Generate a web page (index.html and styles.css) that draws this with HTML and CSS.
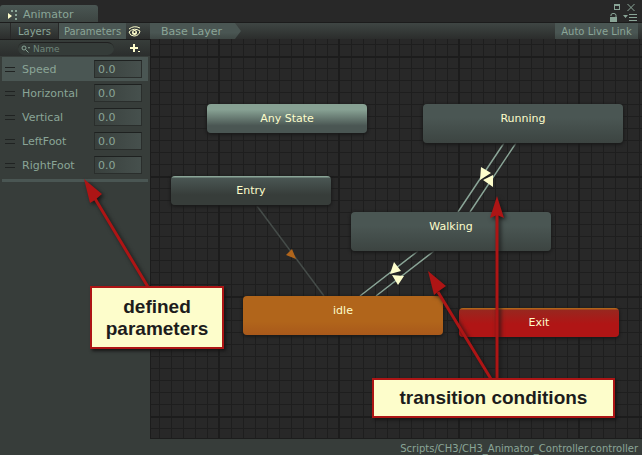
FILE: index.html
```html
<!DOCTYPE html>
<html lang="en">
<head>
<meta charset="utf-8">
<title>Animator</title>
<link rel="stylesheet" href="styles.css">
</head>
<body>
<div class="window">
  <header class="titlebar">
    <div class="tab">
      <svg class="tab-icon" width="10" height="10" viewBox="0 0 10 10" aria-hidden="true">
        <path class="bright" d="M0 3v6l4-3z"/>
        <path class="dim" d="M3 0h2v2H3zM7 0h2v2H7zM7 4h2v2H7zM7 8h2v2H7z"/>
      </svg>
      <h1>Animator</h1>
    </div>
    <div class="controls">
      <div class="control-row">
        <button type="button" aria-label="Maximize"><svg width="6" height="6" viewBox="0 0 6 6"><path class="fill" fill-rule="evenodd" d="M0 0h6v6H0zM1 2v3h4V2z"/></svg></button>
        <button type="button" aria-label="Close"><svg width="8" height="7" viewBox="0 0 8 7"><path class="line" d="M.5 0l7 7M7.500 0l-7 7"/></svg></button>
      </div>
      <div class="control-row">
        <button type="button" aria-label="Lock"><svg width="9" height="9" viewBox="0 0 9 9"><path class="line" d="M2 3V2q0-1.500 2-1.500h1q2 0 2 2V4"/><path class="fill" d="M1 4h7v5H1z"/></svg></button>
        <button type="button" aria-label="Window menu"><svg width="14" height="7" viewBox="0 0 14 7"><path class="fill" d="M0 1h5L2.500 4zM6 0h8v1H6zM6 3h8v1H6zM6 6h8v1H6z"/></svg></button>
      </div>
    </div>
  </header>

  <div class="body">
    <aside class="sidebar">
      <div class="toolbar">
        <button type="button" class="side-tab">Layers</button>
        <button type="button" class="side-tab active">Parameters</button>
        <button type="button" class="eye" aria-label="Toggle panel">
          <svg width="13" height="11" viewBox="0 0 13 11"><path class="eye-line" d="M1 3q5-4 11-1M1 6q5-5 11-1q-1 5-6 5Q2 10 1 6z"/><circle class="bright" cx="6.500" cy="6.500" r="2.500"/><circle class="pupil" cx="6.500" cy="6" r="1"/></svg>
        </button>
      </div>
      <div class="search-row">
        <label class="search">
          <svg width="9" height="8" viewBox="0 0 9 8"><circle class="line" cx="3" cy="3" r="2"/><path class="line" d="M4.500 4.500l3 3"/><path class="fill" d="M7 2h2L8 4z"/></svg>
          <input type="search" placeholder="Name" aria-label="Search by name">
        </label>
        <button type="button" aria-label="Add parameter"><svg width="10" height="9" viewBox="0 0 10 9"><path class="bright" d="M3 0h2v3h3v2H5v3H3V5H0V3h3zM8 7h2v1H8z"/></svg></button>
      </div>
      <ul class="params">
        <li class="selected"><i class="grip"></i><label for="p1">Speed</label><input id="p1" value="0.0"></li>
        <li><i class="grip"></i><label for="p2">Horizontal</label><input id="p2" value="0.0"></li>
        <li><i class="grip"></i><label for="p3">Vertical</label><input id="p3" value="0.0"></li>
        <li><i class="grip"></i><label for="p4">LeftFoot</label><input id="p4" value="0.0"></li>
        <li><i class="grip"></i><label for="p5">RightFoot</label><input id="p5" value="0.0"></li>
      </ul>
    </aside>

    <main class="graph">
      <div class="toolbar">
        <button type="button" class="crumb">Base Layer</button>
        <button type="button" class="live">Auto Live Link</button>
      </div>
      <div class="canvas">
        <svg class="links" width="490" height="398" viewBox="0 0 490 398" aria-hidden="true">
          <path class="entry-link" d="M106 167L173 257"/>
          <path class="entry-arrow" d="M141 210l-6 6 10 4z"/>
          <path class="link" d="M353 104L307 173M365 104L319 173M267 212L209 257M283 212L225 257"/>
          <path class="arrow" d="M330 128l10 6-11 7zM342 136v12l-10-7zM243 223l7 9-11 3zM241 236l12 1-6 9z"/>
        </svg>
        <div class="node any">Any State</div>
        <div class="node state running">Running</div>
        <div class="node entry">Entry</div>
        <div class="node state walking">Walking</div>
        <div class="node state idle">idle</div>
        <div class="node exit">Exit</div>
      </div>
      <footer class="status">Scripts/CH3/CH3_Animator_Controller.controller</footer>
    </main>
  </div>

  <svg class="pointers" width="642" height="455" viewBox="0 0 642 455" aria-hidden="true">
    <path class="shaft" d="M148 287L94 197M491 379L438 292M497 379V210"/>
    <path class="head" d="M84 179l6 24 5-3 7-6zM428 271l6 24 5-4 7-5zM497 196l-7 22 7-3 7 3z"/>
  </svg>
  <div class="callout defined">defined parameters</div>
  <div class="callout conditions">transition conditions</div>
</div>
</body>
</html>
```

FILE: styles.css
```css
* { box-sizing: border-box; }

body {
  margin: 0;
  background: #282828;
  color: #8aa597;
  font: 11px/14px "DejaVu Sans", Verdana, sans-serif;
}

button, input {
  margin: 0;
  padding: 0;
  border: 0;
  background: none;
  color: inherit;
  font: inherit;
}

svg { display: block; }
.fill, .dim { fill: #8aa597; }
.bright { fill: #fdfdcb; }
.line { fill: none; stroke: #8aa597; }
.eye-line { fill: none; stroke: #fdfdcb; stroke-width: 1; }
.pupil { fill: #282828; }

.window {
  position: relative;
  display: flex;
  flex-direction: column;
  min-height: 100vh;
  overflow: hidden;
}

.titlebar {
  display: flex;
  justify-content: space-between;
  height: 22px;
}

.tab {
  display: flex;
  align-items: center;
  gap: 5px;
  width: 98px;
  margin-top: 5px;
  padding: 3px 8px 0;
  border-radius: 3px 3px 0 0;
  background: linear-gradient(#4a5653, #3d4542);
}
.tab h1 { margin: 0; font-size: 11px; font-weight: normal; }

.controls {
  display: flex;
  flex-direction: column;
  gap: 2px;
  padding: 3px 5px 0 0;
}
.control-row {
  display: flex;
  justify-content: flex-end;
  align-items: center;
  gap: 5px;
  height: 8px;
}
.control-row:first-child { gap: 7px; padding-right: 2px; }

.body { display: flex; flex: 1; }

.toolbar {
  display: flex;
  height: 17px;
  border-top: 1px solid #1c1c1c;
  background: linear-gradient(#3f4644, #2b2d2c);
  font-size: 10px;
}

.sidebar {
  width: 150px;
  flex: none;
  background: #373d3a;
}
.sidebar .toolbar { padding-left: 10px; }
.side-tab { width: 48px; padding-top: 1px; border-left: 1px solid #282828; }
.side-tab.active { width: 68px; background: #4a5653; }
.eye { padding-left: 2px; }

.search-row {
  display: flex;
  align-items: center;
  justify-content: space-between;
  height: 17px;
  padding: 0 10px 0 18px;
  border-top: 1px solid #1c1c1c;
  background: linear-gradient(#373d3a, #2b2e2d);
}
.search {
  display: flex;
  align-items: center;
  gap: 3px;
  width: 96px;
  height: 13px;
  padding-left: 3px;
  border-top: 1px solid #202020;
  border-radius: 7px;
  background: #353c39;
}
.search input { width: 70px; height: 12px; font-size: 9px; outline: 0; }
.search input::placeholder { color: #70867b; opacity: 1; }

.params {
  margin: 0 2px;
  padding: 1px 0 2px;
  list-style: none;
  border-bottom: 3px solid #4a5653;
}
.params li {
  display: flex;
  align-items: center;
  height: 24px;
  padding-left: 3px;
}
.params .selected { background: #4a5653; }
.grip {
  width: 10px;
  height: 5px;
  margin-right: 7px;
  border: solid #202322;
  border-width: 1px 0;
}
.params label { width: 72px; padding-top: 2px; }
.params input {
  width: 48px;
  height: 18px;
  padding: 0 3px;
  border: 1px solid #2a2e2c;
  border-top-color: #1e2120;
  background: linear-gradient(90deg, #39403d, #46504d);
}

.graph {
  display: flex;
  flex: 1;
  flex-direction: column;
  min-width: 0;
}
.graph .toolbar { justify-content: space-between; padding-right: 4px; }
.crumb {
  padding: 1px 19px 0 11px;
  background: linear-gradient(#4a5653 60%, #3e4744);
  clip-path: polygon(0 0, calc(100% - 6px) 0, 100% 50%, calc(100% - 6px) 100%, 0 100%);
  font-size: 11px;
}
.live { width: 83px; padding-top: 1px; background: linear-gradient(#4a5653 60%, #3e4744); }

.canvas {
  position: relative;
  flex: 1;
  border-left: 1px solid #1c1c1c;
  background:
    linear-gradient(90deg, #1c1c1c 2px, transparent 2px) 67px 0 / 120px 120px,
    linear-gradient(#1c1c1c 2px, transparent 2px) 0 17px / 120px 120px,
    linear-gradient(90deg, #1e1e1e 1px, transparent 1px) 8px 0 / 12px 12px,
    linear-gradient(#1e1e1e 1px, transparent 1px) 0 5px / 12px 12px,
    #282828;
}
.links { position: absolute; top: 0; left: 0; }
.link { fill: none; stroke: #8aa597; stroke-width: 1.500; }
.arrow { fill: #fdfdcb; }
.entry-link { stroke: #454c49; stroke-width: 1.500; }
.entry-arrow { fill: #b1651b; }

.node {
  position: absolute;
  width: 160px;
  height: 29px;
  padding-top: 8px;
  border-radius: 4px;
  box-shadow: 0 1px 3px 1px #1a1a1a;
  color: #fdfdcb;
  text-align: center;
}
.state { width: 200px; height: 39px; background: linear-gradient(#4a5653 35%, #3c4441); }
.any { left: 56px; top: 65px; background: linear-gradient(#87a193 20%, #4a5653 75%); }
.running { left: 272px; top: 65px; }
.entry {
  left: 20px;
  top: 137px;
  background: linear-gradient(#8aa597 1px, #4a5653 2px, #373d3a 65%);
}
.walking { left: 200px; top: 173px; }
.idle { left: 92px; top: 257px; background: linear-gradient(#b1651b 65%, #a9591b); }
.exit { left: 308px; top: 269px; background: linear-gradient(#b1651b 1px, #98271f 2px, #b01515 55%); }

.status {
  height: 17px;
  padding: 3px 4px 0 0;
  border-top: 1px solid #1c1c1c;
  background: #373d3a;
  font-size: 10px;
  text-align: right;
}

.pointers {
  position: absolute;
  top: 0;
  left: 0;
  filter: drop-shadow(2px 2px 2px #161616);
}
.shaft { fill: none; stroke: #ad1515; stroke-width: 3; }
.head { fill: #ad1515; }

.callout {
  position: absolute;
  display: flex;
  align-items: center;
  justify-content: center;
  border: 2px solid #ad1515;
  background: #fdfdcb;
  box-shadow: 2px 2px 3px #161616;
  color: #1c1c1c;
  font: bold 19px/22px "Liberation Sans", Arial, sans-serif;
  text-align: center;
}
.defined { left: 90px; top: 286px; width: 134px; height: 63px; }
.conditions { left: 372px; top: 378px; width: 243px; height: 40px; }
```
